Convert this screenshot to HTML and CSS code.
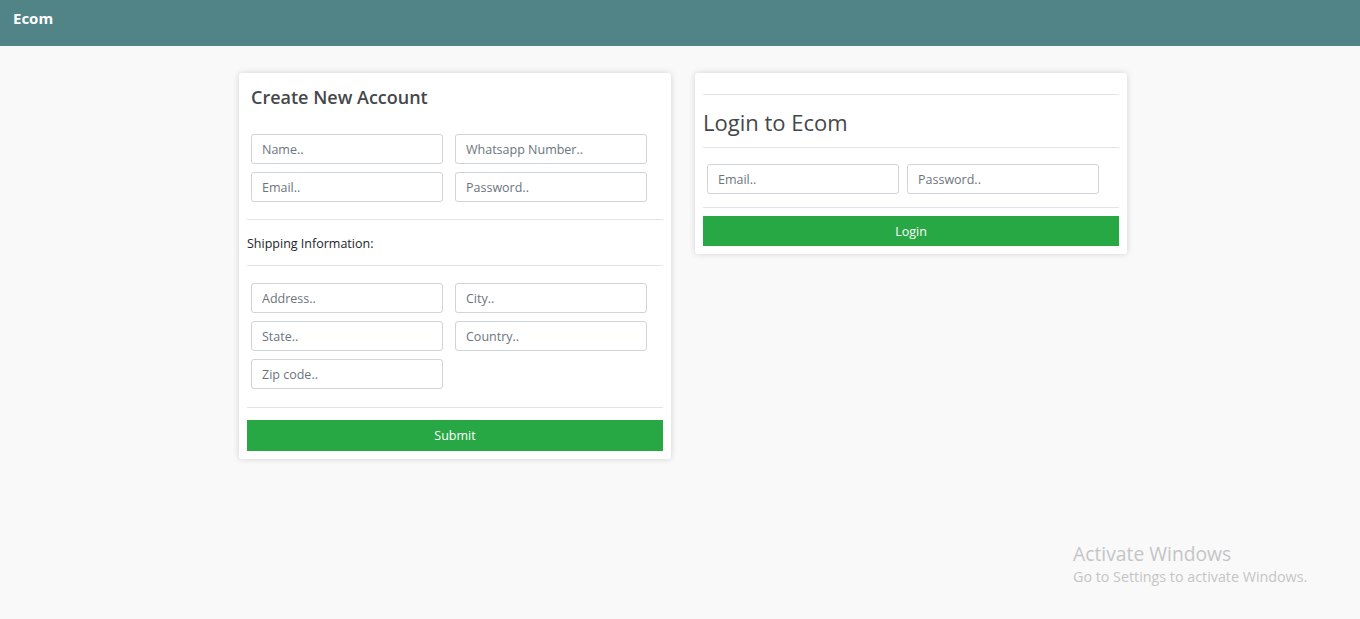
FILE: index.html
```html
<!DOCTYPE html>
<html>
<head>
<meta charset="utf-8">
<title>Ecom</title>
<link rel="stylesheet" href="styles.css">
</head>
<body>
<header class="navbar"><span class="brand">Ecom</span></header>
<main class="page">
  <section class="card card-register">
    <h2 class="card-title">Create New Account</h2>
    <div class="fields">
      <input class="field" type="text" placeholder="Name..">
      <input class="field" type="text" placeholder="Whatsapp Number..">
      <input class="field" type="text" placeholder="Email..">
      <input class="field" type="password" placeholder="Password..">
    </div>
    <hr class="rule">
    <p class="section-label">Shipping Information:</p>
    <hr class="rule rule-tight">
    <div class="fields">
      <input class="field" type="text" placeholder="Address..">
      <input class="field" type="text" placeholder="City..">
      <input class="field" type="text" placeholder="State..">
      <input class="field" type="text" placeholder="Country..">
      <input class="field" type="text" placeholder="Zip code..">
    </div>
    <hr class="rule rule-bottom">
    <button class="btn-success submit">Submit</button>
  </section>
  <section class="card card-login">
    <hr class="rule rule-top">
    <h2 class="login-title">Login to Ecom</h2>
    <hr class="rule rule-tight">
    <div class="login-fields">
      <input class="field" type="text" placeholder="Email..">
      <input class="field" type="password" placeholder="Password..">
    </div>
    <hr class="rule rule-login">
    <button class="btn-success login">Login</button>
  </section>
</main>
<div class="watermark">
  <div class="wm-title">Activate Windows</div>
  <div class="wm-sub">Go to Settings to activate Windows.</div>
</div>
</body>
</html>
```
FILE: styles.css
```css
* { box-sizing: border-box; }
html, body { margin: 0; padding: 0; }
body {
  background: #f9f9f9;
  font-family: "Open Sans", "Noto Sans", sans-serif;
  color: #212529;
  height: 619px;
  overflow: hidden;
  position: relative;
}
.navbar {
  height: 46px;
  background: #508487;
  padding: 8px 13px;
}
.brand {
  color: #fff;
  font-weight: 700;
  font-size: 15px;
  line-height: 20px;
  display: block;
}
.page {
  display: flex;
  align-items: flex-start;
  gap: 24px;
  padding: 27px 0 0 239px;
}
.card {
  width: 432px;
  background: #fff;
  border-radius: 3px;
  box-shadow: 0 0 6px rgba(0,0,0,0.16);
  padding: 8px;
}
.card-title {
  margin: 0;
  padding: 4px 4px 0;
  font-size: 18px;
  font-weight: 600;
  color: #45474a;
  line-height: 24px;
  height: 53px;
}
.fields {
  display: grid;
  grid-template-columns: 192px 192px;
  column-gap: 12px;
  row-gap: 8px;
  padding: 0 4px;
}
.field {
  display: block;
  width: 192px;
  height: 30px;
  border: 1px solid #cfd3da;
  border-radius: 3px;
  padding: 0 10px;
  font-family: "Open Sans", "Noto Sans", sans-serif;
  font-size: 12.5px;
  color: #495057;
  background: #fff;
  outline: none;
}
.field::placeholder { color: #6c757d; }
.rule {
  border: 0;
  border-top: 1px solid #e2e4e7;
  margin: 17px 0 0;
  height: 0;
}
.rule-tight { margin-top: 0; }
.section-label {
  margin: 0;
  padding: 15px 0 0;
  height: 45px;
  font-size: 12.5px;
  line-height: 18px;
  color: #212529;
}
.rule + .fields { margin-top: 17px; }
.rule-bottom { margin-top: 18px; }
.btn-success {
  display: block;
  width: 100%;
  background: #28a745;
  border: 0;
  color: #fff;
  font-family: "Open Sans", "Noto Sans", sans-serif;
  font-size: 12.5px;
  cursor: pointer;
}
.submit { height: 31px; margin-top: 12px; }
.rule-top { margin-top: 13px; }
.login-title {
  margin: 0;
  padding-top: 12px;
  height: 52px;
  font-size: 22px;
  font-weight: 400;
  color: #45474a;
  line-height: 30px;
}
.login-fields {
  display: flex;
  gap: 8px;
  padding: 0 4px;
  margin-top: 16px;
}
.rule-login { margin-top: 13px; }
.login { height: 30px; margin-top: 8px; }
.watermark {
  position: absolute;
  left: 1073px;
  top: 540px;
  color: #c5c5c5;
  font-family: "Open Sans", "Noto Sans", sans-serif;
}
.wm-title { font-size: 19.3px; line-height: 27px; }
.wm-sub { font-size: 14.3px; line-height: 20px; }
```
